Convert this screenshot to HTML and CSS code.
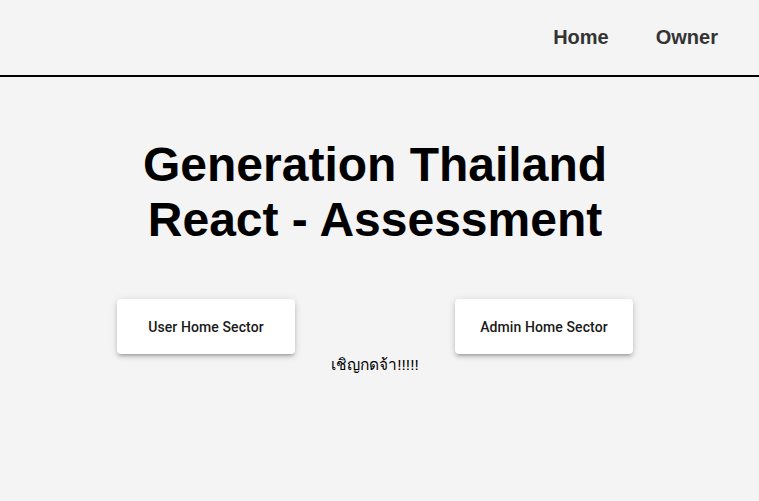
FILE: index.html
```html
<!DOCTYPE html>
<html lang="en">
<head>
<meta charset="utf-8">
<title>Generation Thailand</title>
<link rel="stylesheet" href="styles.css">
</head>
<body>
<header class="topbar">
  <nav class="nav">
    <a class="nav-link" href="#">Home</a>
    <a class="nav-link" href="#">Owner</a>
  </nav>
</header>
<main class="main">
  <h1 class="title">Generation Thailand<br>React - Assessment</h1>
  <div class="actions">
    <button class="sector-btn" type="button">User Home Sector</button>
    <p class="invite">เชิญกดจ้า!!!!!</p>
    <button class="sector-btn" type="button">Admin Home Sector</button>
  </div>
</main>
</body>
</html>
```

FILE: styles.css
```css
html, body {
  margin: 0;
  padding: 0;
  background: #f4f4f4;
  font-family: "Liberation Sans", Arial, sans-serif;
}

.topbar {
  height: 75px;
  border-bottom: 2px solid #000;
  display: flex;
  justify-content: flex-end;
  align-items: center;
  padding-right: 41px;
}

.nav {
  display: flex;
  gap: 47px;
  padding-top: 0;
  padding-bottom: 1px;
}

.nav-link {
  font-size: 20px;
  font-weight: bold;
  color: #333;
  text-decoration: none;
}

.main {
  width: 750px;
  display: flex;
  flex-direction: column;
  align-items: center;
}

.title {
  margin: 60px 0 0;
  font-size: 48px;
  font-weight: bold;
  text-align: center;
  color: #000;
}

.actions {
  margin-top: 52px;
  width: 516px;
  display: flex;
  justify-content: space-between;
  align-items: flex-start;
}

.sector-btn {
  width: 178px;
  height: 55px;
  border: none;
  border-radius: 4px;
  background: #fff;
  box-shadow: 0 3px 3px -2px rgba(0,0,0,0.2), 0 3px 4px 0 rgba(0,0,0,0.14), 0 1px 8px 0 rgba(0,0,0,0.12);
  font-family: Roboto, "Liberation Sans", sans-serif;
  font-weight: 500;
  font-size: 14px;
  letter-spacing: 0.1px;
  color: #1a1a1a;
  cursor: pointer;
}

.invite {
  margin: 53px 0 0;
  font-size: 15.5px;
  color: #000;
}
```
